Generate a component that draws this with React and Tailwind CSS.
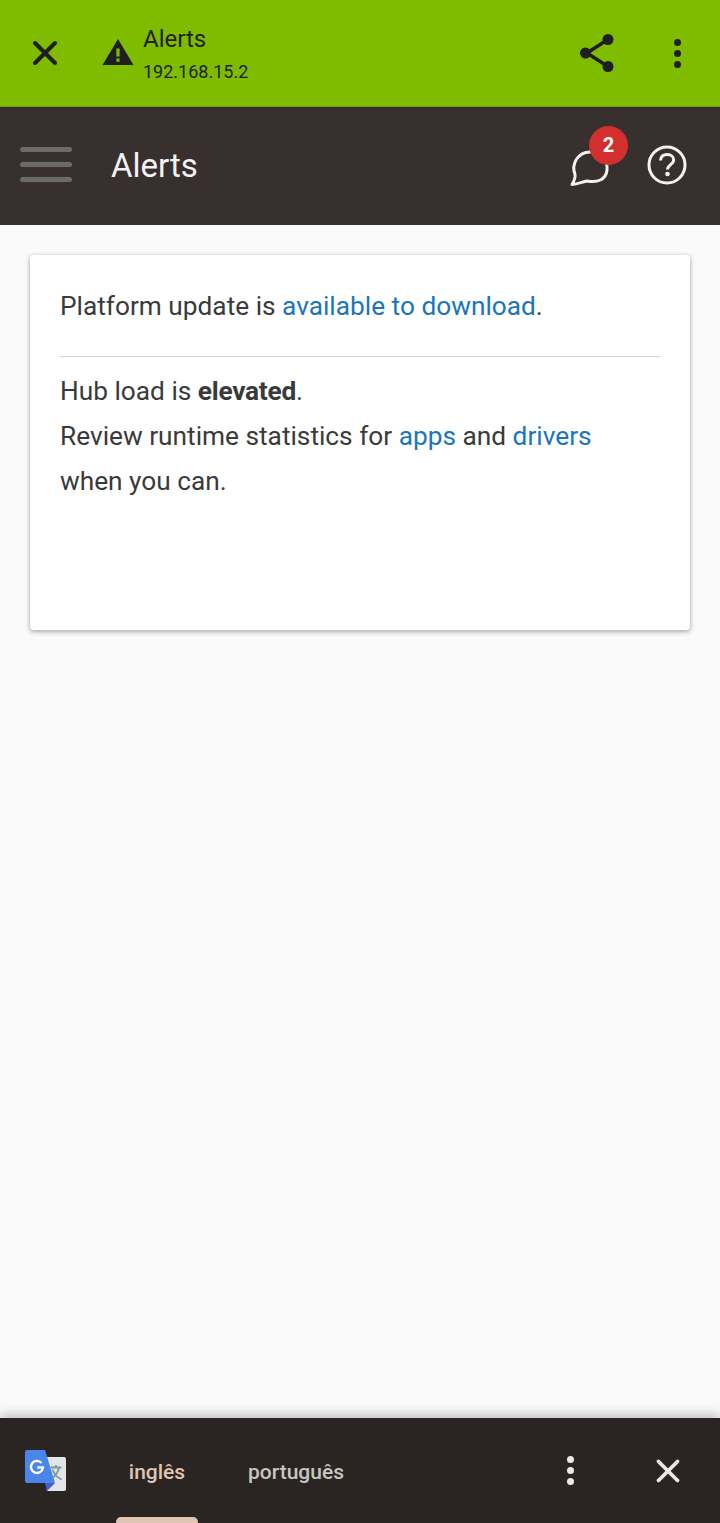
import { X } from 'lucide-react'

function TranslateLogo() {
  return (
    <svg width="42" height="42" viewBox="0 0 42 42" className="shrink-0">
      <path d="M20 7h19a2 2 0 0 1 2 2v30a2 2 0 0 1-2 2H22z" fill="#e3e5e6" />
      <path d="M25.500 17.500h11M31 15v2.500M34 18c-1.400 5-5 9.500-9 11.500M27.500 19.500c1.400 4 4.500 8 9 10" fill="none" stroke="#7c9a9a" strokeWidth="1.800" />
      <path d="M20 33h10l-8 8z" fill="#3f5fd0" />
      <path d="M2 0h18l10 33H2a2 2 0 0 1-2-2V2a2 2 0 0 1 2-2z" fill="#4a86ea" />
      <path d="M16.500 13a6 6 0 1 0 1.400 4.500h-5.600" fill="none" stroke="#fff" strokeWidth="2.400" />
    </svg>
  )
}

function TopBar() {
  return (
    <header className="flex h-[107px] shrink-0 items-center border-b border-[#6f9f0a] bg-[#7fbc00] text-[#1f1f1f]">
      <div className="flex w-[102px] shrink-0 justify-center pr-[12px]">
        <X className="size-[40px]" strokeWidth={2.4} />
      </div>
      <svg width="32" height="28" viewBox="0 0 32 28" className="mb-[2px] shrink-0">
        <path d="M16 1 31.500 27H.500z" fill="#1f1f1f" />
        <path d="M14.400 10.500h3.200v8h-3.200zM14.400 20.500h3.200v3.200h-3.200z" fill="#7fbc00" />
      </svg>
      <div className="ml-[9px] flex-1">
        <div className="text-[24px] leading-[30px]">Alerts</div>
        <div className="mt-[7px] text-[18px] leading-[22px]">192.168.15.2</div>
      </div>
      <svg width="36" height="40" viewBox="0 0 36 40" className="mr-[59px] shrink-0">
        <path d="M8 20 28 7M8 20l20 13" stroke="#1f1f1f" strokeWidth="3.400" />
        <circle cx="6.500" cy="20" r="5.500" fill="#1f1f1f" />
        <circle cx="29" cy="6.500" r="5.500" fill="#1f1f1f" />
        <circle cx="29" cy="33.500" r="5.500" fill="#1f1f1f" />
      </svg>
      <div className="mr-[39px] flex flex-col gap-[4px]">
        <span className="size-[7px] rounded-full bg-[#1f1f1f]" />
        <span className="size-[7px] rounded-full bg-[#1f1f1f]" />
        <span className="size-[7px] rounded-full bg-[#1f1f1f]" />
      </div>
    </header>
  )
}

function AppBar() {
  return (
    <div className="flex h-[118px] shrink-0 items-center bg-[#382f2f] text-[#f4f2f2]">
      <div className="ml-[20px] mt-[-4px] flex w-[52px] flex-col gap-[10px]">
        <span className="h-[5px] rounded-full bg-[#6b6b6b]" />
        <span className="h-[5px] rounded-full bg-[#6b6b6b]" />
        <span className="h-[5px] rounded-full bg-[#6b6b6b]" />
      </div>
      <div className="ml-[39px] mt-[-2px] flex-1 text-[33px] leading-none">Alerts</div>
      <div className="relative mr-[37px] mt-[1px] size-[40px]">
        <svg width="40" height="40" viewBox="0 0 40 40">
          <path d="M2 37.500c2.500-4 3.400-7 3-10C1 17 8 5 20 5c10 0 18 8 17 18-1 10-10 13-20 11-4 .6-9 3-15 3.500z" fill="none" stroke="#f4f2f2" strokeWidth="3" strokeLinejoin="round" />
        </svg>
        <span className="absolute -top-[21px] left-[19px] flex size-[39px] items-center justify-center rounded-full bg-[#d32f2f] text-[20px] font-bold text-white">2</span>
      </div>
      <svg width="40" height="40" viewBox="0 0 40 40" className="mr-[33px] mt-[-3px] shrink-0">
        <circle cx="20" cy="20" r="18" fill="none" stroke="#f4f2f2" strokeWidth="3" />
        <path d="M13.500 15.500c.3-3.800 3-6 6.700-6 3.800 0 6.500 2.400 6.500 5.500 0 4.500-6.200 4.800-6.200 9.500" fill="none" stroke="#f4f2f2" strokeWidth="3" />
        <circle cx="20.500" cy="29" r="2.300" fill="#f4f2f2" />
      </svg>
    </div>
  )
}

function AlertCard() {
  return (
    <section className="mx-[30px] mt-[30px] h-[375px] rounded-[3px] bg-white px-[30px] pt-[29px] text-[26.25px] leading-[45px] text-[#3a3a3a] shadow-[0_2px_5px_rgba(0,0,0,0.28),0_0_4px_rgba(0,0,0,0.1)]">
      <p>
        Platform update is <a className="text-[#1c75bc]">available to download</a>.
      </p>
      <hr className="mb-[12px] mt-[27px] border-[#d2d2d2]" />
      <p>
        Hub load is <b className="font-bold tracking-[-0.25px]">elevated</b>.
      </p>
      <p>
        Review runtime statistics for <a className="text-[#1c75bc]">apps</a> and{' '}
        <a className="text-[#1c75bc]">drivers</a>
      </p>
      <p>when you can.</p>
    </section>
  )
}

function TranslateBar() {
  return (
    <footer className="relative flex h-[105px] shrink-0 items-center bg-[#2a2522] shadow-[0_-4px_10px_rgba(0,0,0,0.22)]">
      <div className="ml-[25px]">
        <TranslateLogo />
      </div>
      <div className="relative ml-[49px] mt-[4px] flex w-[82px] justify-center text-[21px] font-medium text-[#e0c4b4]">
        inglês
        <span className="absolute left-0 top-[60px] h-[10px] w-[82px] rounded-t-[5px] bg-[#e0c4b4]" />
      </div>
      <div className="ml-[50px] mt-[4px] flex-1 text-[21px] font-medium text-[#c9c5c2]">português</div>
      <div className="mr-[75px] flex flex-col gap-[4px]">
        <span className="size-[7px] rounded-full bg-[#ece8e4]" />
        <span className="size-[7px] rounded-full bg-[#ece8e4]" />
        <span className="size-[7px] rounded-full bg-[#ece8e4]" />
      </div>
      <X className="mr-[33px] size-[38px] text-[#ece8e4]" strokeWidth={2.4} />
    </footer>
  )
}

export default function App() {
  return (
    <div className="flex h-[1523px] flex-col overflow-hidden bg-[#fafafa] font-['Roboto',sans-serif]">
      <TopBar />
      <AppBar />
      <main className="flex-1">
        <AlertCard />
      </main>
      <TranslateBar />
    </div>
  )
}
